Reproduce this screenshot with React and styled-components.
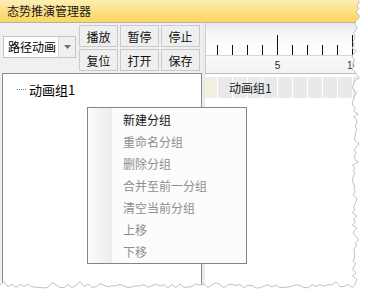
import React from "react";
import styled, { createGlobalStyle } from "styled-components";

const Global = createGlobalStyle`
  html, body { margin: 0; padding: 0; background: #ffffff; }
  body { font-family: "Noto Sans CJK SC", "Noto Sans", sans-serif; }
`;

const Window = styled.div`
  position: relative;
  width: 368px;
  height: 296px;
  overflow: hidden;
  background: #f0f0f0;
  display: flex;
  flex-direction: column;
  font-family: "Noto Sans CJK SC", "Noto Sans", sans-serif;
  font-size: 12px;
  color: #000;
`;

const TitleBar = styled.div`
  height: 23px;
  box-sizing: border-box;
  flex: none;
  border-bottom: 1px solid #b4b4b4;
  background: linear-gradient(#fcefb6 0%, #fde08a 45%, #fcd65e 100%);
  padding-left: 7px;
  display: flex;
  align-items: center;
  font-size: 12px;
  line-height: 22px;
  color: #1a1a1a;
`;

const Main = styled.div`
  flex: 1;
  display: flex;
  min-height: 0;
`;

const LeftCol = styled.div`
  width: 202px;
  flex: none;
  display: flex;
  flex-direction: column;
`;

const Toolbar = styled.div`
  height: 50px;
  flex: none;
  display: flex;
  align-items: flex-start;
  padding-left: 3px;
  box-sizing: border-box;
`;

const Combo = styled.div`
  margin-top: 13px;
  width: 73px;
  height: 22px;
  box-sizing: border-box;
  border: 1px solid #c4c4c4;
  background: #fff;
  display: flex;
`;

const ComboText = styled.div`
  flex: 1;
  padding-left: 4px;
  line-height: 20px;
  font-size: 12px;
`;

const ComboArrow = styled.div`
  width: 16px;
  border-left: 1px solid #d6d6d6;
  background: #f0f0f0;
  display: flex;
  align-items: center;
  justify-content: center;
`;

const ButtonGrid = styled.div`
  margin-left: 3px;
  margin-top: 2px;
  display: grid;
  grid-template-columns: repeat(3, 39px);
  grid-auto-rows: 22px;
  gap: 2px;
`;

const ToolButton = styled.div`
  box-sizing: border-box;
  border: 1px solid #cacaca;
  background: #efefef;
  display: flex;
  align-items: center;
  justify-content: center;
  font-size: 12px;
  color: #111;
`;

const TreePanel = styled.div`
  flex: 1;
  margin-left: 2px;
  background: #fff;
  border: 1px solid #8c8c8c;
  box-sizing: border-box;
  padding-top: 5px;
  padding-left: 14px;
`;

const TreeItem = styled.div`
  display: flex;
  align-items: center;
  height: 20px;
`;

const TreeLine = styled.span`
  width: 9px;
  margin-right: 3px;
  border-top: 1px dotted #7a7a7a;
`;

const TreeLabel = styled.span`
  font-size: 13px;
  color: #000;
`;

const Splitter = styled.div`
  width: 3px;
  flex: none;
  background: #ebebef;
`;

const RightCol = styled.div`
  flex: 1;
  display: flex;
  flex-direction: column;
  background: #fff;
`;

const Ruler = styled.div`
  height: 51px;
  flex: none;
  box-sizing: border-box;
  border-bottom: 1px solid #b9b9b9;
  background: linear-gradient(#e8e8e8 0px, #f8f8f8 12px, #ffffff 32px, #f9f9f9 33px, #f3f3f3 50px);
`;

const TrackRow = styled.div`
  margin-top: 3px;
  height: 21px;
  flex: none;
  padding-left: 24px;
  font-size: 12px;
  line-height: 21px;
  color: #1a1a1a;
  background:
    linear-gradient(90deg, #f1efe0 0px, #f1efe0 12px, transparent 12px),
    repeating-linear-gradient(90deg, #ffffff 0px, #ffffff 1px, #e9e9ec 1px, #e9e9ec 15px);
  background-position: 0 0, 12px 0;
  background-repeat: no-repeat, repeat-x;
`;

const Menu = styled.div`
  position: absolute;
  left: 87px;
  top: 107px;
  width: 160px;
  height: 157px;
  box-sizing: border-box;
  border: 1px solid #848484;
  background:
    linear-gradient(90deg, #fbfbfb 0px, #ececec 24px, transparent 24px),
    #fcfcfc;
  padding-top: 1px;
`;

const MenuItem = styled.div`
  height: 22px;
  line-height: 22px;
  padding-left: 35px;
  font-size: 12px;
  color: ${(p) => (p.$disabled ? "#8e8e8e" : "#151515")};
  white-space: nowrap;
`;

function RulerDrawing() {
  const ticks = [];
  for (let k = 0; k < 11; k++) {
    const x = 12.5 + 15 * k;
    const long = k === 4 || k === 9;
    ticks.push(
      <line key={k} x1={x} x2={x} y1={long ? 12 : 22} y2={32} stroke="#111" strokeWidth="1" />
    );
  }
  return (
    <svg width="163" height="50" style={{ display: "block" }}>
      <line x1="0" x2="163" y1="32.5" y2="32.5" stroke="#d4d4d4" strokeWidth="1" />
      <line x1="0.5" x2="0.5" y1="0" y2="50" stroke="#cfcfcf" strokeWidth="1" />
      {ticks}
      <text x="72.5" y="46" fontSize="10" fontFamily="Liberation Sans, sans-serif" textAnchor="middle" fill="#1c1c3c">5</text>
      <text x="142" y="46" fontSize="10" fontFamily="Liberation Sans, sans-serif" fill="#5a2468">10</text>
    </svg>
  );
}

function seeded(seed) {
  let s = seed;
  return () => {
    s = (s * 1103515245 + 12345) % 2147483648;
    return s / 2147483648;
  };
}

function TornEdge() {
  const r = seeded(11);
  const right = [];
  for (let y = 0; y <= 285; y += 3) {
    let x = 352 + r() * 5;
    if (r() > 0.85) x += 3;
    if (y < 20) x += 3;
    right.push([x, y]);
  }
  const bottom = [];
  for (let x = 352; x >= -2; x -= 4) {
    let y = 284 + r() * 4;
    if (r() > 0.9) y -= 4;
    bottom.push([x, y]);
  }
  const pts = [...right, ...bottom];
  const jag = pts.map((p, i) => `${i === 0 ? "M" : "L"}${p[0].toFixed(1)} ${p[1].toFixed(1)}`).join(" ");
  const shape = `M-2 -2 H370 V298 H-2 Z M-2 -2 L${right[0][0].toFixed(1)} -2 ` +
    pts.map((p) => `L${p[0].toFixed(1)} ${p[1].toFixed(1)}`).join(" ") + " L-2 -2 Z";
  return (
    <svg
      width="368"
      height="296"
      style={{ position: "absolute", left: 0, top: 0, pointerEvents: "none" }}
    >
      <path d={shape} fill="#ffffff" fillRule="evenodd" />
      <path d={jag} fill="none" stroke="#c2c2c2" strokeWidth="1" />
    </svg>
  );
}

const menuItems = [
  { label: "新建分组", disabled: false },
  { label: "重命名分组", disabled: true },
  { label: "删除分组", disabled: true },
  { label: "合并至前一分组", disabled: true },
  { label: "清空当前分组", disabled: true },
  { label: "上移", disabled: true },
  { label: "下移", disabled: true },
];

export default function App() {
  return (
    <>
      <Global />
      <Window>
        <TitleBar>态势推演管理器</TitleBar>
        <Main>
          <LeftCol>
            <Toolbar>
              <Combo>
                <ComboText>路径动画</ComboText>
                <ComboArrow>
                  <svg width="7" height="4" viewBox="0 0 7 4">
                    <path d="M0 0 H7 L3.5 4 Z" fill="#6e6e6e" />
                  </svg>
                </ComboArrow>
              </Combo>
              <ButtonGrid>
                <ToolButton>播放</ToolButton>
                <ToolButton>暂停</ToolButton>
                <ToolButton>停止</ToolButton>
                <ToolButton>复位</ToolButton>
                <ToolButton>打开</ToolButton>
                <ToolButton>保存</ToolButton>
              </ButtonGrid>
            </Toolbar>
            <TreePanel>
              <TreeItem>
                <TreeLine />
                <TreeLabel>动画组1</TreeLabel>
              </TreeItem>
            </TreePanel>
          </LeftCol>
          <Splitter />
          <RightCol>
            <Ruler>
              <RulerDrawing />
            </Ruler>
            <TrackRow>动画组1</TrackRow>
          </RightCol>
        </Main>
        <Menu>
          {menuItems.map((m) => (
            <MenuItem key={m.label} $disabled={m.disabled}>
              {m.label}
            </MenuItem>
          ))}
        </Menu>
        <TornEdge />
      </Window>
    </>
  );
}
